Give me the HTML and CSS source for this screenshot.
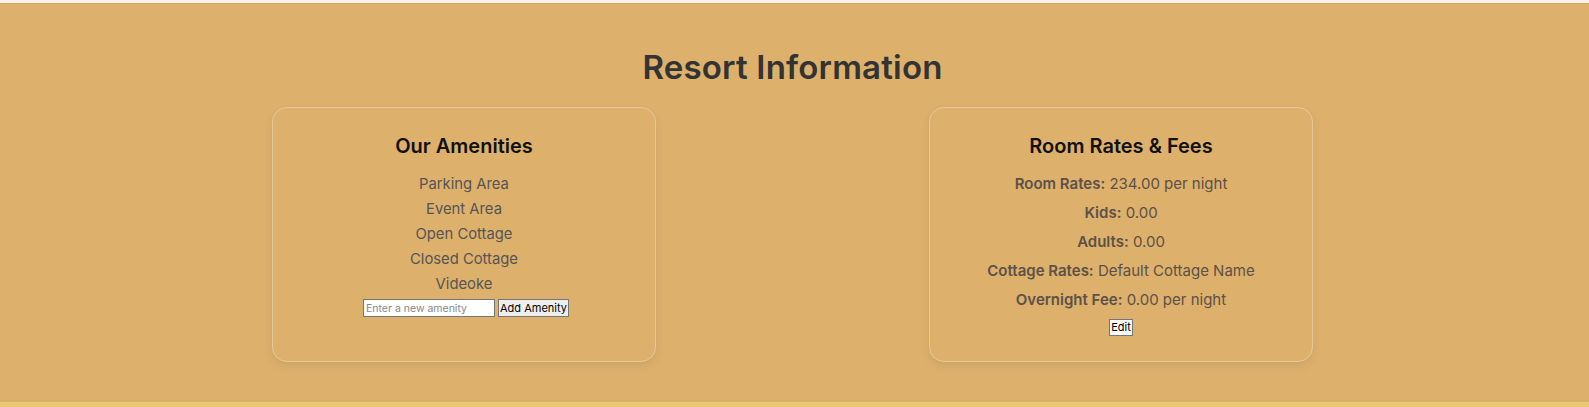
FILE: index.html
```html
<!DOCTYPE html>
<html lang="en">
<head>
<meta charset="utf-8">
<title>Resort Information</title>
<link rel="stylesheet" href="styles.css">
</head>
<body>
<div class="topstrip"></div>
<section class="info">
  <h2 class="info-title">Resort Information</h2>
  <div class="cards">
    <div class="card">
      <h3 class="card-title">Our Amenities</h3>
      <ul class="amenities">
        <li>Parking Area</li>
        <li>Event Area</li>
        <li>Open Cottage</li>
        <li>Closed Cottage</li>
        <li>Videoke</li>
      </ul>
      <div class="add-row">
        <input class="amenity-input" type="text" placeholder="Enter a new amenity">
        <button class="btn btn-add">Add Amenity</button>
      </div>
    </div>
    <div class="card">
      <h3 class="card-title">Room Rates &amp; Fees</h3>
      <p class="rate"><strong>Room Rates:</strong> 234.00 per night</p>
      <p class="rate"><strong>Kids:</strong> 0.00</p>
      <p class="rate"><strong>Adults:</strong> 0.00</p>
      <p class="rate"><strong>Cottage Rates:</strong> Default Cottage Name</p>
      <p class="rate"><strong>Overnight Fee:</strong> 0.00 per night</p>
      <div class="edit-row"><button class="btn btn-edit">Edit</button></div>
    </div>
  </div>
</section>
<div class="bottomstrip"></div>
</body>
</html>
```
FILE: styles.css
```css
html, body {
  margin: 0;
  padding: 0;
}
body {
  background: #fbf4ec;
  font-family: "Inter", "Open Sans", sans-serif;
  overflow: hidden;
}
.topstrip {
  height: 3px;
  background: #faf2e8;
}
.info {
  background: #ddb06c;
  height: 399px;
  box-sizing: border-box;
  padding-top: 41px;
  padding-right: 4px;
  border-top: 1px solid #d8a862;
}
.info-title {
  margin: 0;
  text-align: center;
  font-size: 33px;
  line-height: 44px;
  font-weight: 600;
  color: #333;
  letter-spacing: 0.2px;
}
.cards {
  display: flex;
  justify-content: center;
  gap: 273px;
  margin-top: 18px;
}
.card {
  width: 384px;
  height: 255px;
  box-sizing: border-box;
  border: 1px solid rgba(255, 255, 255, 0.3);
  border-radius: 15px;
  box-shadow: 0 4px 10px rgba(0, 0, 0, 0.07);
  padding: 23px 20px 24px;
  text-align: center;
}
.card-title {
  margin: 0;
  font-size: 20px;
  line-height: 30px;
  font-weight: 600;
  color: #111;
}
.amenities {
  list-style: none;
  margin: 11px 0 0;
  padding: 0;
}
.amenities li {
  font-size: 14.8px;
  line-height: 25px;
  color: #555;
}
.add-row {
  margin-top: 2px;
  display: flex;
  justify-content: center;
  gap: 3px;
  padding-left: 4px;
}
.amenity-input {
  width: 132px;
  height: 18px;
  box-sizing: border-box;
  border: 1px solid #767676;
  background: #fff;
  font-family: inherit;
  font-size: 10.5px;
  padding: 0 2px;
  margin: 0;
}
.amenity-input::placeholder {
  color: #888;
}
.btn {
  height: 18px;
  box-sizing: border-box;
  border: 1px solid #767676;
  background: #efefef;
  font-family: inherit;
  font-size: 11px;
  color: #000;
  padding: 0 2px;
  margin: 0;
}
.btn-add {
  padding: 0 1px;
}
.rate {
  margin: 0;
  margin-top: 6.5px;
  font-size: 15px;
  line-height: 22.5px;
  color: #5b5148;
}
.card-title + .rate {
  margin-top: 12px;
}
.rate strong {
  font-weight: 600;
}
.edit-row {
  margin-top: 7px;
  display: flex;
  justify-content: center;
}
.btn-edit {
  height: 17px;
  background: #f8f8f8;
  padding: 0 1px;
}
.bottomstrip {
  height: 6px;
  background: #ecc873;
}
```
